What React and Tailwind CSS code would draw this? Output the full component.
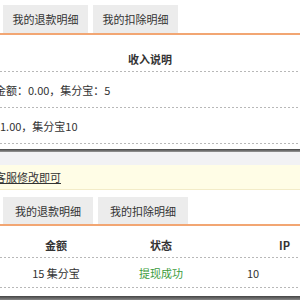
import React from 'react';

const Dots = () => (
  <div className="h-px w-full bg-[linear-gradient(to_right,#b8b8b8_50%,transparent_50%)] bg-[length:4px_1px]" />
);

const Tabs = ({ width, height }) => (
  <div className={`flex gap-[5px] pl-[3px] ${height}`}>
    <div className={`${width} bg-[#ececec] flex items-center justify-center text-[#333]`}>我的退款明细</div>
    <div className={`${width} bg-[#ececec] flex items-center justify-center text-[#333]`}>我的扣除明细</div>
  </div>
);

const App = () => {
  return (
    <div className="w-[300px] h-[300px] overflow-hidden bg-white text-[11px] leading-[12px] text-[#333] font-['Noto_Sans_CJK_SC','Microsoft_YaHei',sans-serif]">
      {/* top panel */}
      <div className="h-[5px]" />
      <Tabs width="w-[85px]" height="h-[28px]" />
      <div className="h-[2px] bg-[#f2a673]" />
      <div className="h-[36px] flex items-end pb-[6px] pl-[128px] font-bold">收入说明</div>
      <Dots />
      <div className="h-[35px] flex items-center ml-[-5px]">金额：0.00，集分宝：5</div>
      <Dots />
      <div className="h-[35px] flex items-center">1.00，集分宝10</div>
      <Dots />
      <div className="h-[5px]" />
      <div className="h-[3px] bg-gradient-to-b from-[#444] to-[#999]" />
      <div className="h-[13px] bg-[#f2f2f4]" />

      {/* notice */}
      <div className="h-[25px] bg-[#fffde6] border-b border-[#f3ecc8] flex items-center ml-[-27px]">
        <span className="underline">联系客服修改即可</span>
      </div>
      <div className="h-[7px]" />

      {/* bottom panel */}
      <Tabs width="w-[90px]" height="h-[27px]" />
      <div className="h-[2px] bg-[#f2a673]" />
      <div className="h-[31px] flex items-end pb-[6px] font-bold">
        <div className="w-[112px] text-center">金额</div>
        <div className="w-[98px] text-center">状态</div>
        <div className="w-[90px] pl-[69px]">IP</div>
      </div>
      <Dots />
      <div className="h-[29px] flex items-end pb-[8px]">
        <div className="w-[112px] text-center">15 集分宝</div>
        <div className="w-[98px] text-center text-[#3c9c3c]">提现成功</div>
        <div className="w-[90px] pl-[37px]">10</div>
      </div>
      <Dots />
      <div className="h-[8px]" />
      <div className="h-[4px] bg-gradient-to-b from-[#444] to-[#888]" />
    </div>
  );
};

export default App;
